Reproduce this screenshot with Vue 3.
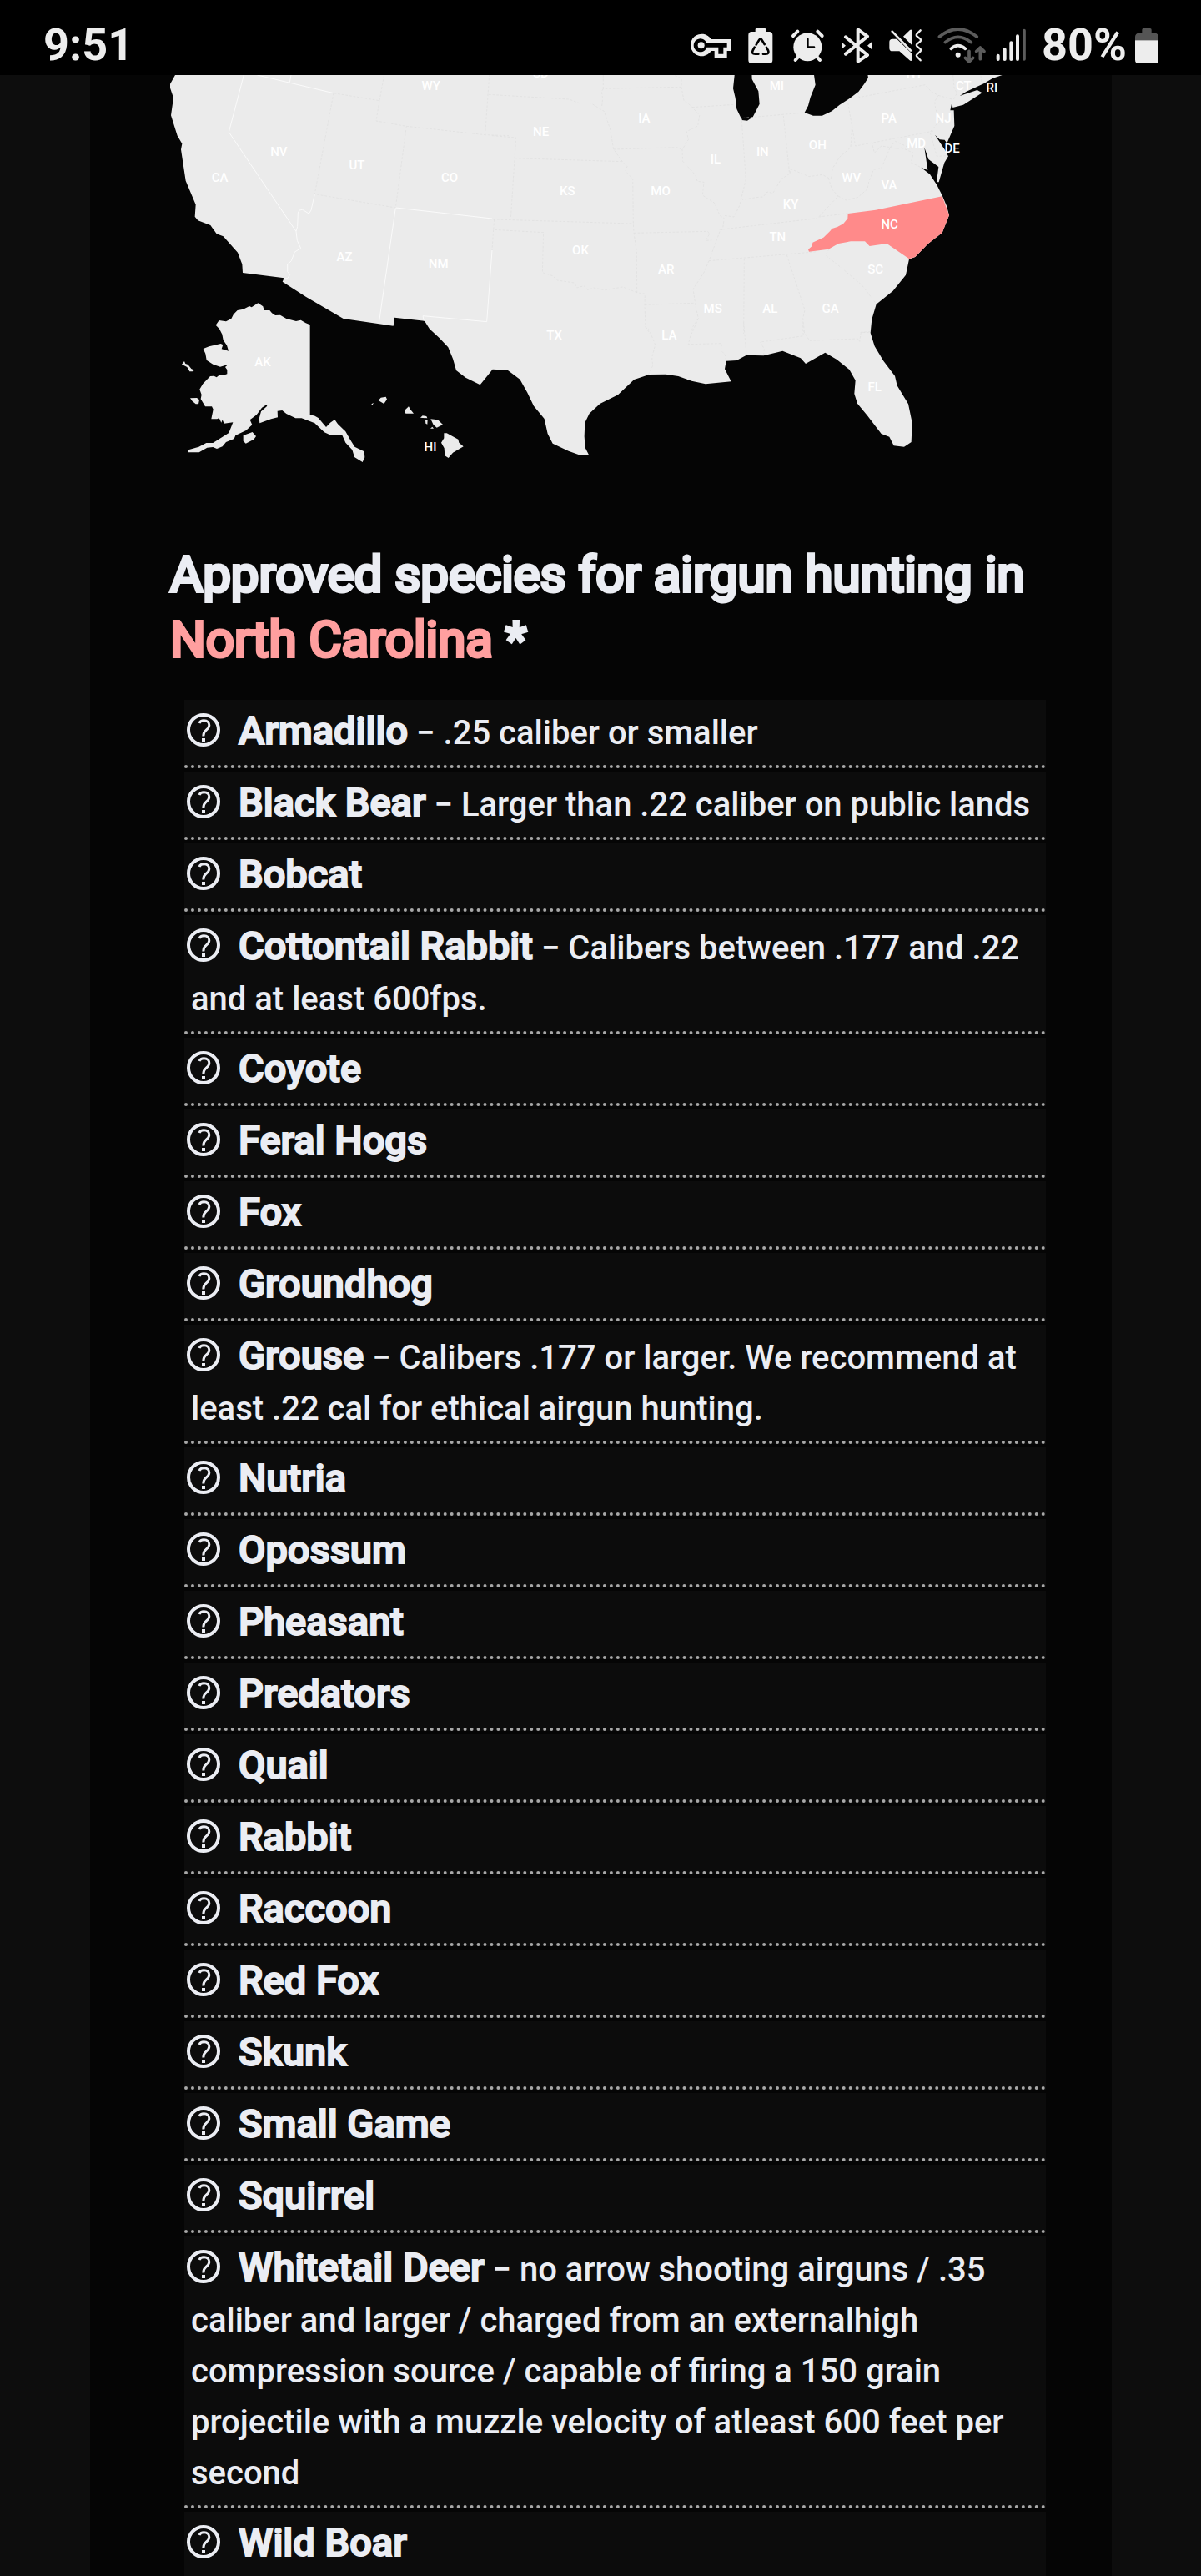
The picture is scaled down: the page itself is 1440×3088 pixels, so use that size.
<script setup>
const region = 'North Carolina'

const species = [
  { name: 'Armadillo', note: '.25 caliber or smaller' },
  { name: 'Black Bear', note: 'Larger than .22 caliber on public lands' },
  { name: 'Bobcat' },
  { name: 'Cottontail Rabbit', note: 'Calibers between .177 and .22 and at least 600fps.' },
  { name: 'Coyote' },
  { name: 'Feral Hogs' },
  { name: 'Fox' },
  { name: 'Groundhog' },
  { name: 'Grouse', note: 'Calibers .177 or larger. We recommend at least .22 cal for ethical airgun hunting.' },
  { name: 'Nutria' },
  { name: 'Opossum' },
  { name: 'Pheasant' },
  { name: 'Predators' },
  { name: 'Quail' },
  { name: 'Rabbit' },
  { name: 'Raccoon' },
  { name: 'Red Fox' },
  { name: 'Skunk' },
  { name: 'Small Game' },
  { name: 'Squirrel' },
  {
    name: 'Whitetail Deer',
    note: 'no arrow shooting airguns / .35 caliber and larger / charged from an externalhigh compression source / capable of firing a 150 grain projectile with a muzzle velocity of atleast 600 feet per second',
  },
  { name: 'Wild Boar' },
]

const labels = [
  ['WY', 1550, 323], ['NV', 1003, 560], ['UT', 1284, 609], ['CA', 791, 653], ['CO', 1617, 653],
  ['AZ', 1239, 939], ['NM', 1577, 963], ['SD', 1945, 278], ['IA', 2317, 441], ['NE', 1946, 489],
  ['KS', 2041, 702], ['MO', 2376, 702], ['IL', 2574, 588], ['IN', 2743, 561], ['MI', 2794, 324],
  ['OH', 2941, 537], ['KY', 2844, 750], ['TN', 2797, 867], ['OK', 2088, 914], ['AR', 2396, 983],
  ['MS', 2564, 1125], ['AL', 2770, 1125], ['GA', 2987, 1125], ['LA', 2407, 1221], ['TX', 1994, 1221],
  ['FL', 3146, 1407], ['SC', 3149, 983], ['NC', 3200, 822], ['VA', 3198, 681], ['WV', 3062, 654],
  ['PA', 3197, 441], ['NJ', 3393, 441], ['MD', 3296, 531], ['DE', 3425, 549], ['CT', 3466, 324],
  ['RI', 3568, 330], ['NY', 3290, 278], ['AK', 945, 1317], ['HI', 1548, 1622],
]
</script>

<template>
  <div class="screen">
    <header class="status">
      <time class="clock">9:51</time>
      <div class="tray">
        <svg width="51" height="44" viewBox="23 27 153 132" aria-hidden="true">
          <path class="lit" d="M100 69H171V111H157V137H112V111H100A40 40 0 1 1 100 69Z" />
          <path class="cut" d="M84 84H157V98H144V122H126V98H84A24 24 0 1 1 84 84Z" />
          <circle class="lit" cx="64" cy="91" r="12" />
        </svg>
        <svg width="33" height="44" viewBox="230 27 99 132" aria-hidden="true">
          <path class="lit" d="M259 42V34Q259 30 263 30H293Q297 30 297 34V42H309Q321 42 321 54V144Q321 156 309 156H246Q234 156 234 144V54Q234 42 246 42Z" />
          <path class="ink" d="M262 89L273 71Q277 65 282 71L292 87M299 99L305 109Q310 122 297 122H287M270 122H258Q244 122 250 109L256 98" />
        </svg>
        <svg width="43" height="44" viewBox="383 27 129 132" aria-hidden="true">
          <circle class="lit" cx="447" cy="97" r="51" />
          <path class="line" stroke-width="12" d="M395 57L411 41M483 41L499 57M412 134L403 144M482 134L491 144" />
          <path class="ink" stroke-width="11" d="M447 68V98H470" />
        </svg>
        <svg width="39" height="44" viewBox="566 27 117 132" aria-hidden="true">
          <path class="line" stroke-width="12" d="M584 61L662 126L628 149V34L662 59L584 122" />
          <path class="lit" d="M569 79L584 92L569 105ZM677 79L662 92L677 105Z" />
        </svg>
        <svg width="41" height="44" viewBox="737 27 123 132" aria-hidden="true">
          <path class="lit" d="M752 68H768L822 121V144Q820 150 814 145L777 112H752Q741 112 741 101V79Q741 68 752 68ZM791 59L815 36Q822 31 822 41V90Z" />
          <path class="line" stroke-width="8" d="M751 41L818 110" />
          <path class="line" stroke-width="7" d="M853 37L840 50Q836 55 841 59L852 68Q856 72 852 77L841 86Q836 90 841 95L852 104Q856 108 852 113L841 123Q836 128 841 132L853 145" />
        </svg>
        <svg class="wifi" width="52" height="44" viewBox="914 27 156 132" aria-hidden="true">
          <circle class="lit" cx="988" cy="125" r="9" />
          <path class="line" stroke-width="11" d="M963 103Q988 81 1014 103" />
          <path class="dim" d="M942 80Q988 42 1035 80M921 60Q988 6 1056 60M1028 112V148M1014 136L1028 150L1042 136M1068 140V100M1054 113L1068 99L1082 113" />
        </svg>
        <svg width="37" height="44" viewBox="1125 27 111 132" aria-hidden="true">
          <path class="line" stroke-width="12" d="M1133 128V141M1157 106V141M1180 82V141M1203 58V141" />
          <path class="dim" stroke-width="12" d="M1227 38V141" />
        </svg>
        <div class="charge">
          <span>80%</span>
          <svg width="28" height="44" viewBox="0 0 84 132" aria-hidden="true">
            <path fill="#555" d="M25 20V8Q25 3 30 3H54Q59 3 59 8V20H70Q84 20 84 34V46H0V34Q0 20 14 20Z" />
            <path class="lit" d="M0 46H84V116Q84 129 71 129H13Q0 129 0 116Z" />
          </svg>
        </div>
      </div>
    </header>

    <main class="page">
      <section class="column">
        <svg class="map" viewBox="612 270 3150 1680" role="img" aria-label="Map of the United States">
          <path class="land" d="M630 262L630 270 609 308 624 352 615 415 638 488 655 517 651 538 668 650 704 736 701 779 712 793 757 810 779 841 803 850 845 897 855 908 871 950 873 981 1022 1000 1016 1013 1100 1067 1235 1146 1415 1172 1419 1142 1527 1154 1545 1183 1580 1215 1612 1249 1629 1290 1641 1332 1675 1358 1727 1384 1772 1328 1826 1331 1870 1364 1897 1412 1920 1460 1958 1506 1970 1560 1988 1595 2045 1622 2087 1637 2118 1636 2105 1610 2102 1570 2104 1520 2120 1487 2158 1452 2223 1420 2281 1365 2335 1347 2395 1346 2440 1353 2488 1370 2538 1381 2630 1372 2607 1327 2612 1298 2650 1296 2685 1277 2747 1279 2815 1262 2880 1288 2898 1308 2968 1268 3010 1293 3055 1329 3077 1368 3073 1416 3084 1451 3120 1495 3170 1560 3199 1571 3215 1603 3252 1607 3278 1590 3281 1520 3267 1453 3227 1387 3219 1352 3178 1298 3146 1245 3131 1197 3136 1148 3152 1094 3212 1046 3258 989 3270 932 3292 924 3338 877 3389 837 3414 774 3405 740 3389 703 3370 665 3345 627 3313 602 3337 612 3325 530 3340 573 3376 600 3369 655 3377 655 3397 585 3411 562 3398 538 3363 485 3380 502 3398 503 3406 515 3433 453 3431 397 3418 397 3424 370 3427 387 3465 377 3533 334 3515 324 3452 345 3475 330 3540 300 3570 282 3605 270 3605 262Z" />
          <path class="water" d="M2927 262L2933 305 2915 350 2907 380 2894 405 2925 416 2957 416 2992 400 3020 377 3055 355 3088 330 3110 300 3123 280 3120 262ZM2643 262L2637 318 2645 352 2650 392 2669 432 2688 434 2708 421 2732 374 2728 328 2705 285 2704 262Z" />

          <g transform="translate(570 1020)" class="land">
            <path d="M206 149L218 132 243 136 262 126 270 110 284 96 305 92 327 81 335 85 358 70 376 82 380 96 400 96 408 106 420 114 438 113 460 126 495 135 512 131 530 142 545 148 545 473 560 475 575 483 603 516 618 500 634 489 645 505 673 532 690 562 706 587 740 604 742 625 734 642 705 624 697 598 673 572 660 543 615 543 597 535 562 502 515 484 493 484 460 468 445 456 428 458 429 481 405 487 364 502 362 485 369 460 391 440 388 436 372 446 353 472 329 490 337 508 315 528 277 546 272 558 243 570 230 586 210 594 196 588 175 590 146 607 108 607 108 598 145 587 172 573 196 573 253 537 268 499 236 503 230 490 226 500 218 483 211 487 190 487 197 452 192 442 168 442 152 415 155 400 148 380 160 360 186 333 200 332 209 337 220 328 232 330 247 325 247 310 240 300 250 291 222 299 196 290 173 275 169 252 161 234 182 226 224 216 232 220 227 235 252 242 246 222 233 203 229 182 219 163Z" />
            <path d="M84 290L93 279 97 288 106 291 118 306 129 311 122 316 112 316 103 300ZM114 412L138 411 147 418 144 433 134 433 122 423ZM305 546L338 534 351 549 343 560 314 575 305 566Z" />
            <path d="M791 420L800 410 818 407 822 416 811 432ZM766 433L774 429 769 437ZM885 456L900 442 906 452 918 467 889 467ZM942 482L950 475 964 477 967 484ZM960 492L968 490 967 506 961 503ZM979 487L1005 490 1023 507 1001 518 989 508ZM978 521L985 515 990 521ZM1027 538L1037 538 1078 560 1081 572 1097 586 1059 608 1043 627 1030 619 1028 592 1017 572 1027 556Z" />
          </g>

          <g transform="translate(570 240)" class="border">
            <path d="M307 30L253 235 495 592M355 30L630 95M477 30L472 56M562 458L549 516 541 528 518 514 507 516 502 525 500 575 495 592 499 625 512 653 490 666 478 698 464 711 464 737 473 748 464 761 450 762M853 507L793 922M853 507L1200 546M1200 660L1181 917 951 896 955 914" />
            <path class="fine" d="M630 95L562 458 853 507 892 214 783 195 795 122 630 95M795 122L812 30M892 214L1175 245 1260 248M1175 245L1190 30" />
          </g>
          <g transform="translate(1770 240)" class="border fine">
            <path d="M-12 100L277 117 314 131 354 130 397 157 403 160 425 225 437 297 469 341 486 358 480 375 506 404 508 562 510 598 520 665 521 812 550 817 549 856 552 935 568 960" />
            <path d="M400 30V79L681 73 681 42 658 32M400 79L394 90 398 115 394 150M681 73L690 122 715 140 746 175 740 213 700 233 706 262 684 298 686 340 732 390 738 412 762 415 757 462 800 490 820 536 835 545 830 580M437 297L664 290 684 298M720 146L872 136M0 248L86 255 67 549M82 329L469 341M-24 548L8 549 506 564M8 549L5 586 185 596 181 740 218 752 235 768 296 777 305 795 330 788 345 803 365 795 405 803 470 792 521 812M5 586L0 660M510 598L776 592 782 602 768 625 790 624M549 856L725 850 733 855" />
            <path d="M898 195L913 405 890 500 870 540 835 535M898 195L898 185 1123 165M1048 177L1070 385 1040 404 1010 455 990 450 975 468 950 470 900 478M830 585L820 590 780 698 762 740 723 800 733 865 742 905 718 960M780 698L1170 665M818 586L1170 545M907 690L905 960M1060 677L1125 875 1118 905 1124 960" />
          </g>
          <g transform="translate(2580 240)" class="border fine">
            <path d="M470 130L497 285 780 231M508 92L510 110 748 65 770 90 795 103 848 118M795 103L782 125 785 150 800 195 765 235 790 322 828 320M848 30L852 75 862 95 850 118M948 32L952 62M485 210L480 290 440 325 415 365 410 400 400 400 378 388 330 395 265 368 260 388M400 400L412 440 435 465 365 540M435 465L462 480 505 470 540 440 545 415 562 370 590 365 622 290 590 285 565 310 557 275M622 290L650 295 660 290 706 310 697 345 733 362M622 290L640 268 700 295M365 540L470 527M402 655L390 678 445 722 520 785 572 853M515 955L550 953" />
          </g>
          <g transform="translate(1920 1020)" class="border fine">
            <path d="M400 155L415 165 437 220 425 265 428 295 412 327M592 125L572 155 556 218 676 215 673 240 688 255 692 278M755 140L765 255M827 257L829 235 815 210 970 188 965 130M970 170L992 205 1165 198 1172 208 1177 175 1210 176" />
          </g>
          <path class="picked" d="M3389 706L3414 774 3389 837 3338 877 3292 924 3270 931 3190 876 3128 885 3111 868 3060 868 3016 876 2980 896 2910 905 2907 897 2921 885 2923 872 2962 854 2985 832 2993 822 3012 816 3033 805 3049 786 3050 768 3150 755Z" />
          <text v-for="[code, x, y] in labels" :key="code" :x="x" :y="y">{{ code }}</text>
        </svg>

        <h2>Approved species for airgun hunting in <span>{{ region }}</span> *</h2>

        <ul>
          <li v-for="item in species" :key="item.name">
            <svg class="help" width="40" height="40" viewBox="0 0 40 40" aria-hidden="true">
              <circle cx="20" cy="20" r="18" />
              <path d="M15 12C16 9.500 18 8.800 20.500 8.800C24.500 8.800 26.800 11 26.800 14.200C26.800 17.500 24.500 19 22.500 20.800C20.500 22.500 19.800 23.800 19.800 27.500" />
              <rect x="18" y="30" width="4" height="4" />
            </svg>
            <strong>{{ item.name }}</strong>
            <template v-if="item.note"> − {{ item.note }}</template>
          </li>
        </ul>
      </section>
    </main>
  </div>
</template>

<style>
body {
  background: #0d0d0d;
}
</style>

<style scoped>
.screen {
  display: flex;
  flex-direction: column;
  height: 100vh;
  overflow: hidden;
  font-family: Roboto, sans-serif;
  font-weight: 500;
  color: #ebedf3;
  background: #0d0d0d;
}

.status {
  flex: none;
  display: flex;
  justify-content: space-between;
  align-items: center;
  height: 90px;
  box-sizing: border-box;
  padding: 20px 51px 0 52px;
  background: #000;
  color: #ededed;
  font-size: 54px;
  line-height: 64px;
  font-weight: 700;
}

.clock,
.charge span {
  padding-bottom: 2px;
}

.tray {
  display: flex;
  align-items: center;
  gap: 18px;
}

.charge {
  display: flex;
  align-items: center;
  gap: 10px;
}

.status svg {
  display: block;
}

.wifi {
  overflow: visible;
}

.lit {
  fill: #ededed;
}

.cut {
  fill: #000;
}

.ink,
.line,
.dim {
  fill: none;
  stroke-linecap: round;
  stroke-linejoin: round;
}

.ink {
  stroke: #000;
  stroke-width: 8;
}

.line {
  stroke: #ededed;
}

.dim {
  stroke: #5c5c5c;
  stroke-width: 11;
}

.page {
  flex: 1;
  min-height: 0;
  overflow: hidden;
  padding: 0 107px 0 108px;
}

.column {
  padding: 0 79px 0 96px;
  background: #050505;
}

.map {
  display: block;
  width: 100%;
}

.land {
  fill: #ebebeb;
}

.water {
  fill: #050505;
}

.picked {
  fill: #ff8a8a;
}

.border path {
  fill: none;
  stroke: #fafafa;
  stroke-width: 3;
}

.border.fine path,
.border path.fine {
  stroke: #dedede;
  stroke-width: 2;
  stroke-dasharray: 8 6;
}

.map text {
  fill: #fff;
  font-size: 45px;
  text-anchor: middle;
}

h2 {
  margin: 0;
  font-size: 60px;
  line-height: 78px;
  font-weight: 400;
  -webkit-text-stroke: 4px currentColor;
}

h2 span {
  color: #ff9f9f;
}

ul {
  list-style: none;
  margin: 33px 0 0 17px;
  padding: 0;
}

li {
  margin-bottom: 4px;
  padding: 8px;
  border-bottom: 4px dotted #a8a8a8;
  background: #0c0c0c;
  font-size: 40px;
  line-height: 61px;
}

strong {
  font-size: 47px;
  line-height: 57px;
  font-weight: 500;
  -webkit-text-stroke: 2px currentColor;
}

.help {
  margin: 0 22px 0 -5px;
  vertical-align: -3px;
  fill: none;
  stroke: currentColor;
  stroke-width: 4;
}

.help path {
  stroke-width: 3;
}

.help rect {
  fill: currentColor;
  stroke: none;
}
</style>
